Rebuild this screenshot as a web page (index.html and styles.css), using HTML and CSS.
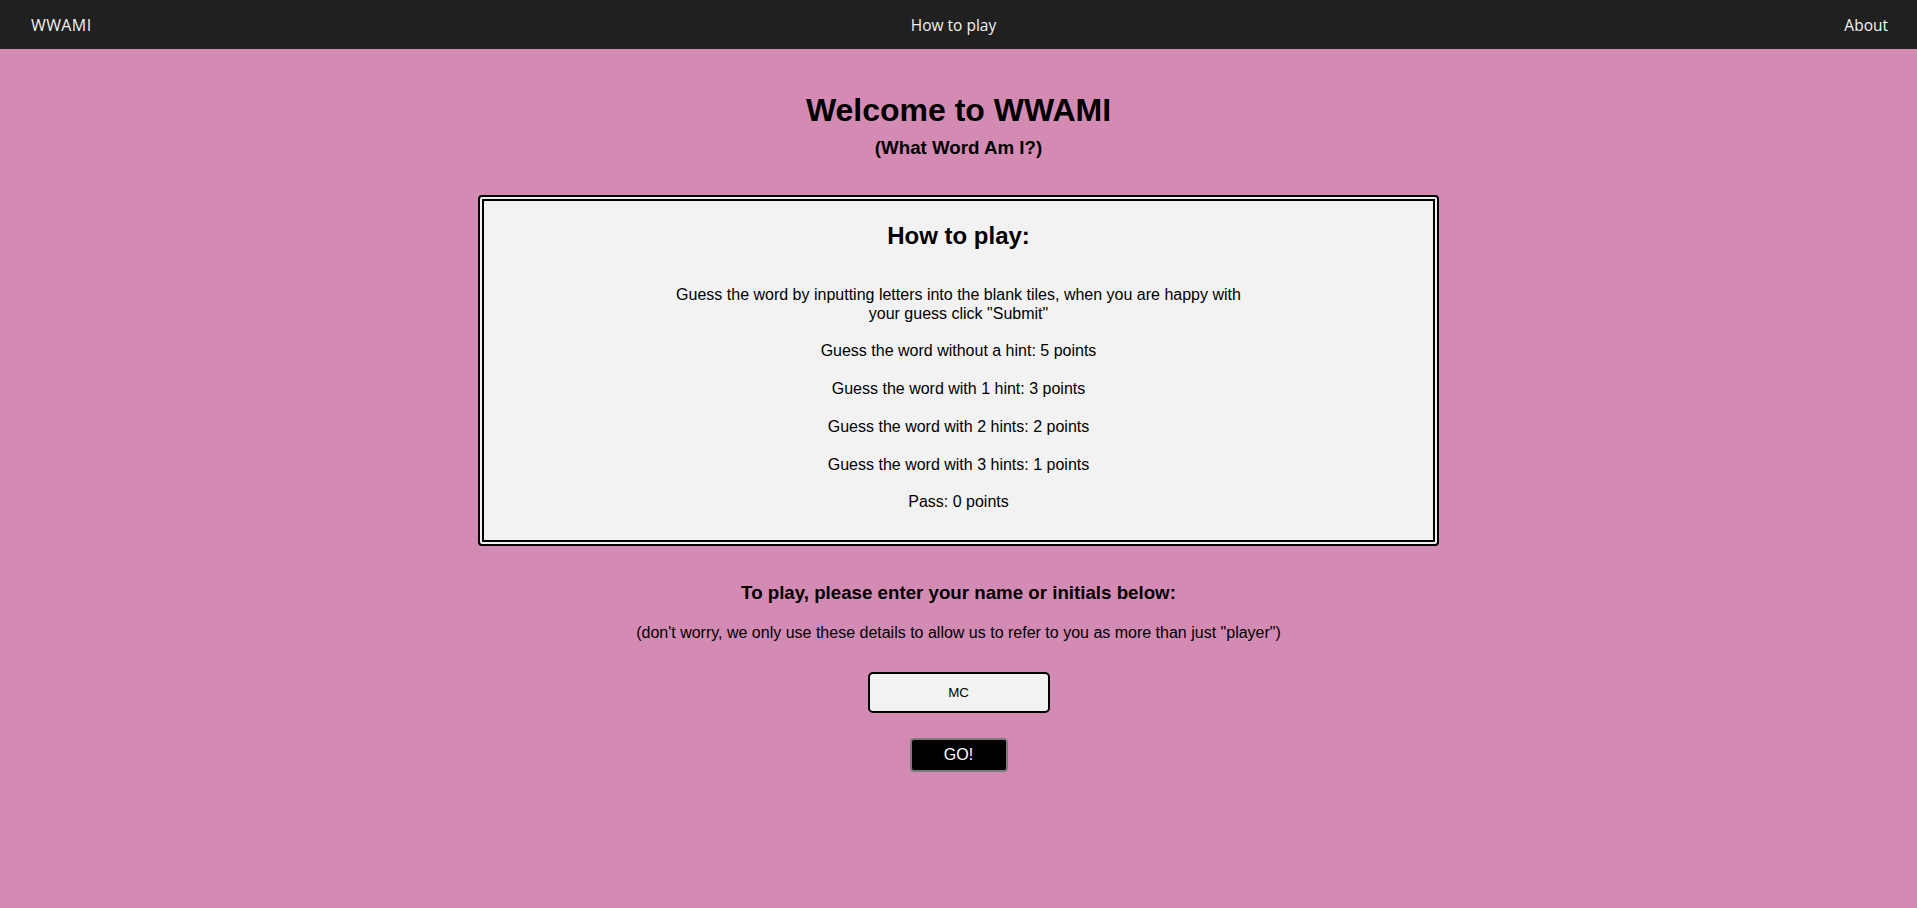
FILE: index.html
```html
<!DOCTYPE html>
<html lang="en">
<head>
<meta charset="utf-8">
<title>WWAMI</title>
<link rel="stylesheet" href="styles.css">
</head>
<body>
<nav class="navbar">
  <a class="nav-brand" href="#">WWAMI</a>
  <a class="nav-link nav-center" href="#">How to play</a>
  <a class="nav-link nav-right" href="#">About</a>
</nav>
<main class="page">
  <h1 class="title">Welcome to WWAMI</h1>
  <h3 class="subtitle">(What Word Am I?)</h3>
  <section class="rules">
    <h2 class="rules-title">How to play:</h2>
    <p class="rules-text">Guess the word by inputting letters into the blank tiles, when you are happy with your guess click "Submit"</p>
    <p class="rules-text">Guess the word without a hint: 5 points</p>
    <p class="rules-text">Guess the word with 1 hint: 3 points</p>
    <p class="rules-text">Guess the word with 2 hints: 2 points</p>
    <p class="rules-text">Guess the word with 3 hints: 1 points</p>
    <p class="rules-text">Pass: 0 points</p>
  </section>
  <h3 class="prompt">To play, please enter your name or initials below:</h3>
  <p class="note">(don't worry, we only use these details to allow us to refer to you as more than just "player")</p>
  <input class="name-input" type="text" value="MC">
  <button class="go-btn" type="button">GO!</button>
</main>
</body>
</html>
```
FILE: styles.css
```css
html, body {
  margin: 0;
  padding: 0;
}
body {
  background: #d38bb4;
  font-family: "Liberation Sans", Arial, sans-serif;
  color: #000;
  min-height: 908px;
}
.navbar {
  height: 49px;
  background: #202020;
  display: grid;
  grid-template-columns: 1fr auto 1fr;
  align-items: center;
  padding: 0 29px 0 31px;
  font-family: "Open Sans", "Noto Sans", sans-serif;
}
.navbar a {
  color: #f2f2f2;
  text-decoration: none;
}
.nav-brand {
  font-size: 16px;
  letter-spacing: 0.4px;
  justify-self: start;
}
.nav-link {
  font-size: 15.5px;
}
.nav-center {
  justify-self: center;
  margin-right: 12px;
}
.nav-right {
  justify-self: end;
}
.page {
  display: flex;
  flex-direction: column;
  align-items: center;
  text-align: center;
}
.title {
  font-size: 32px;
  font-weight: bold;
  margin: 43px 0 0;
  line-height: 37px;
}
.subtitle {
  font-size: 18.72px;
  font-weight: bold;
  margin: 8px 0 0;
  line-height: 21.5px;
}
.rules {
  box-sizing: border-box;
  width: 961px;
  margin-top: 36px;
  border: 6px double #000;
  border-radius: 4px;
  background: #f2f2f2;
  display: flex;
  flex-direction: column;
  align-items: center;
  padding: 21px 0 28px;
}
.rules-title {
  font-size: 24px;
  font-weight: bold;
  margin: 0 0 37px;
  line-height: 27.6px;
}
.rules-text {
  width: 60%;
  font-size: 16px;
  line-height: 18.4px;
  margin: 0 0 19.4px;
}
.rules-text:last-child {
  margin-bottom: 0;
}
.prompt {
  font-size: 18.72px;
  font-weight: bold;
  margin: 36px 0 0;
  line-height: 21.5px;
}
.note {
  font-size: 16px;
  line-height: 18.4px;
  margin: 21px 0 0;
}
.name-input {
  box-sizing: border-box;
  width: 182px;
  height: 41px;
  margin-top: 29px;
  border: 2px solid #000;
  border-radius: 5px;
  background: #f2f2f2;
  text-align: center;
  font-family: "Liberation Sans", Arial, sans-serif;
  font-size: 13.33px;
  color: #000;
  padding: 0;
}
.go-btn {
  box-sizing: border-box;
  width: 98px;
  height: 34px;
  margin-top: 25px;
  background: #000;
  color: #fff;
  border: 2px solid #7a7a7a;
  border-radius: 4px;
  font-family: "Liberation Sans", Arial, sans-serif;
  font-size: 16px;
  padding: 0;
}
```
